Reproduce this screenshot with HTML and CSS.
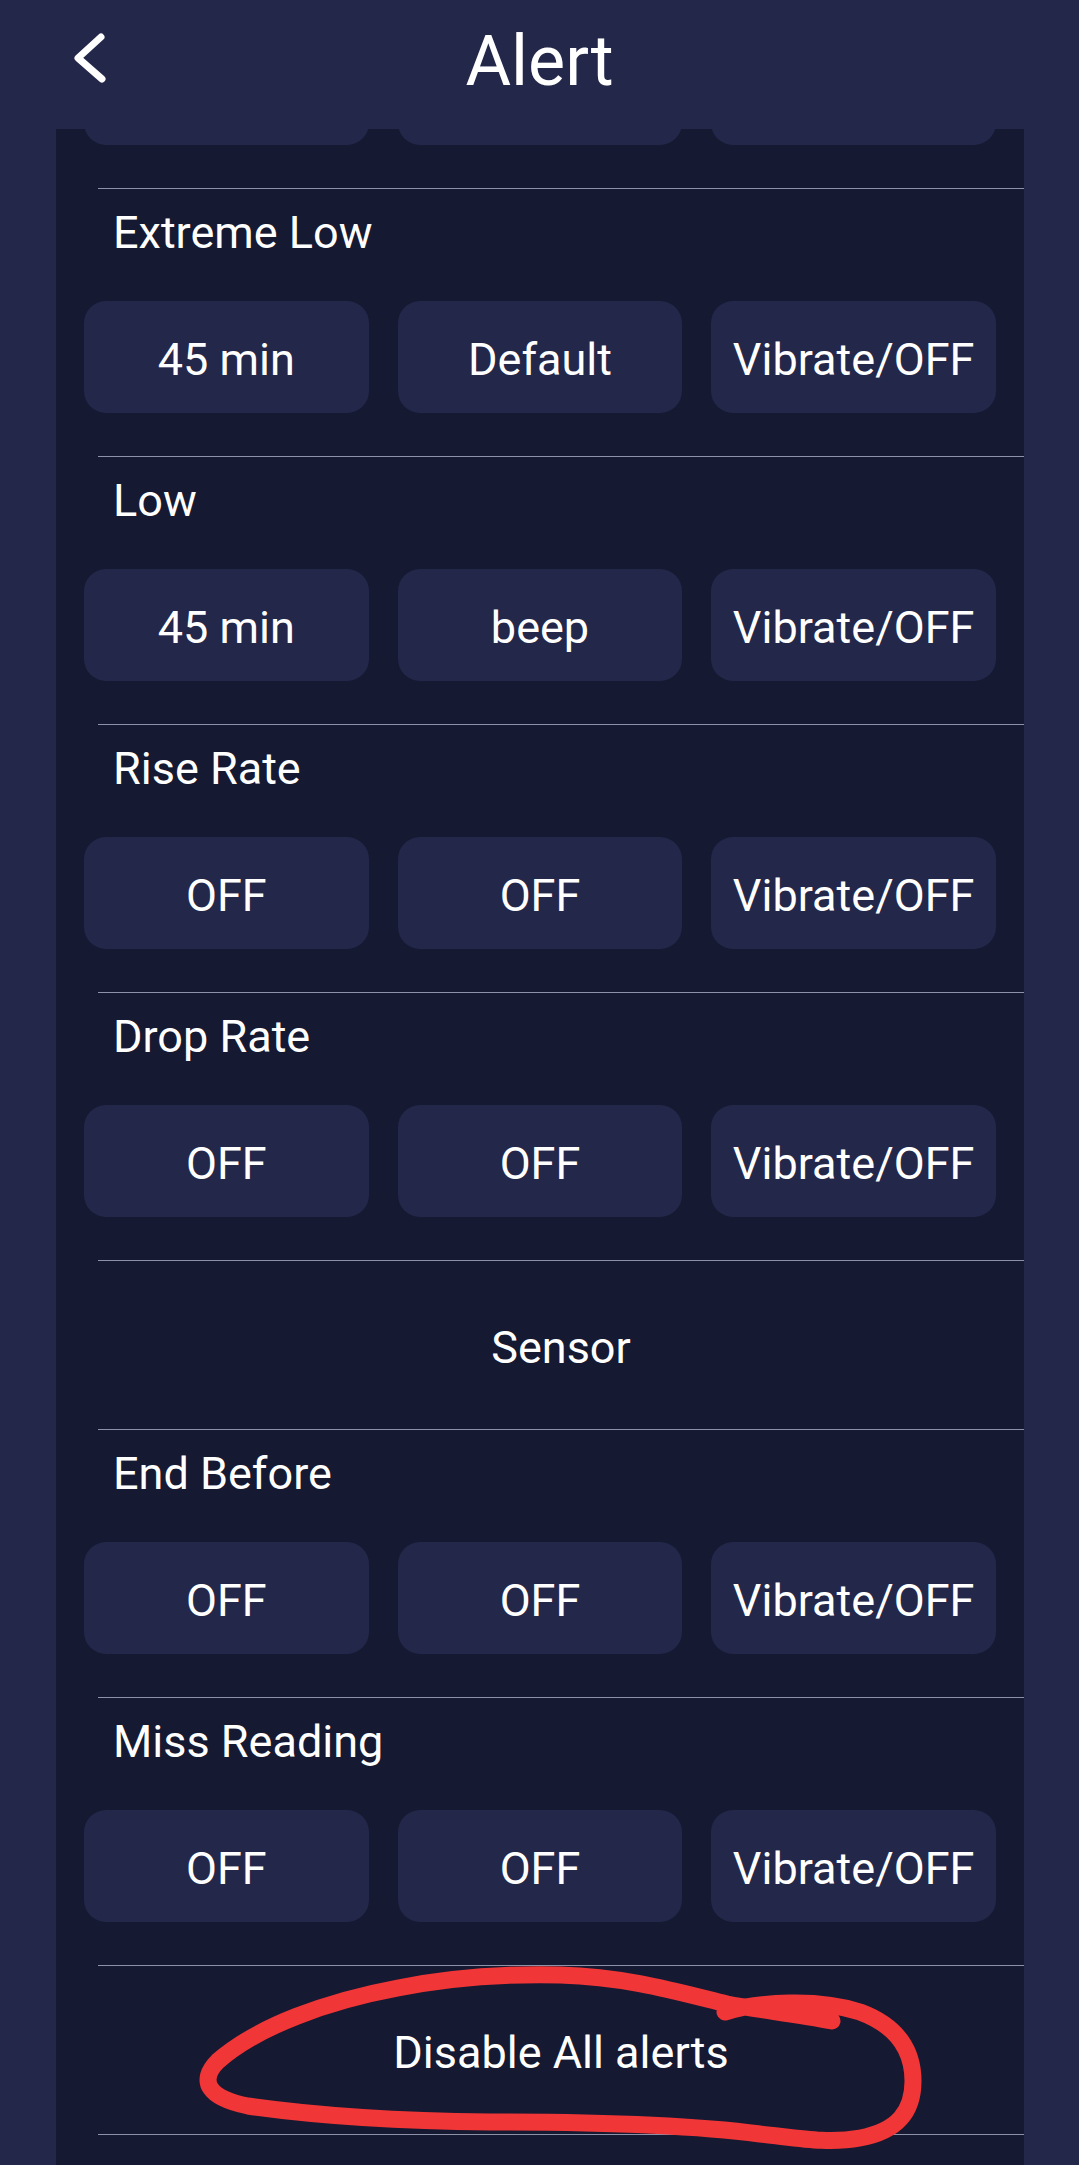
FILE: index.html
```html
<!DOCTYPE html>
<html lang="en">
<head>
  <meta charset="UTF-8">
  <title>Alert</title>
  <link rel="stylesheet" href="styles.css">
</head>
<body>
  <header class="topbar">
    <a class="back" href="#" aria-label="Back">
      <svg width="40" height="56" viewBox="0 0 40 56">
        <path d="M31 7 L8 28 L32 49" fill="none" stroke="#fff" stroke-width="7" stroke-linecap="round" stroke-linejoin="round"/>
      </svg>
    </a>
    <h1>Alert</h1>
    <span></span>
  </header>

  <main class="panel">
    <div class="list">
      <!-- previous row, scrolled under the header -->
      <section class="alert">
        <div class="alert-name">&nbsp;</div>
        <div class="options">
          <button class="option"></button>
          <button class="option"></button>
          <button class="option"></button>
        </div>
      </section>

      <section class="alert">
        <div class="alert-name">Extreme Low</div>
        <div class="options">
          <button class="option">45 min</button>
          <button class="option">Default</button>
          <button class="option">Vibrate/OFF</button>
        </div>
      </section>

      <section class="alert">
        <div class="alert-name">Low</div>
        <div class="options">
          <button class="option">45 min</button>
          <button class="option">beep</button>
          <button class="option">Vibrate/OFF</button>
        </div>
      </section>

      <section class="alert">
        <div class="alert-name">Rise Rate</div>
        <div class="options">
          <button class="option">OFF</button>
          <button class="option">OFF</button>
          <button class="option">Vibrate/OFF</button>
        </div>
      </section>

      <section class="alert">
        <div class="alert-name">Drop Rate</div>
        <div class="options">
          <button class="option">OFF</button>
          <button class="option">OFF</button>
          <button class="option">Vibrate/OFF</button>
        </div>
      </section>

      <section class="alert heading">Sensor</section>

      <section class="alert">
        <div class="alert-name">End Before</div>
        <div class="options">
          <button class="option">OFF</button>
          <button class="option">OFF</button>
          <button class="option">Vibrate/OFF</button>
        </div>
      </section>

      <section class="alert">
        <div class="alert-name">Miss Reading</div>
        <div class="options">
          <button class="option">OFF</button>
          <button class="option">OFF</button>
          <button class="option">Vibrate/OFF</button>
        </div>
      </section>

      <section class="alert heading disable">
        Disable All alerts
        <svg class="scribble" viewBox="0 0 926 170" width="926" height="170">
          <path d="M627 46 C660 36, 720 32, 762 46 C800 60, 815 85, 815 115 C815 145, 800 165, 762 172 C730 178, 700 172, 662 168 C600 160, 500 156, 392 156 C300 155, 220 150, 150 140 C110 132, 100 115, 120 95 C160 60, 230 35, 300 22 C360 10, 420 8, 462 9 C530 11, 580 26, 629 38 C660 44, 700 48, 734 55" fill="none" stroke="#f03636" stroke-width="17" stroke-linecap="round" stroke-linejoin="round"/>
        </svg>
      </section>

      <section class="alert"></section>
    </div>
  </main>
</body>
</html>
```

FILE: styles.css
```css
body { margin: 0; background: #23274a; color: #fff; font-family: Roboto, "Noto Sans", sans-serif; }

.topbar { position: fixed; top: 0; left: 0; right: 0; z-index: 2; height: 129px; box-sizing: border-box; padding-bottom: 7px; background: #23274a; display: grid; grid-template-columns: 1fr auto 1fr; align-items: center; }
.topbar h1 { margin: 0; font-size: 70px; font-weight: 400; line-height: 1; }
.back { align-self: start; justify-self: start; margin: 30px 0 0 70px; display: block; line-height: 0; }

.panel { margin: 0 55px 0 56px; min-height: 100vh; background: #151931; overflow: hidden; }
.list { margin-top: -80px; }

.alert { margin-left: 42px; border-top: 1px solid #8e92a8; }
.alert-name { padding: 18px 0 0 15px; margin-bottom: 42px; font-size: 45px; line-height: 52px; }
.options { display: grid; grid-template-columns: repeat(3, 1fr); gap: 29px; margin: 0 28px 43px -14px; }
.option { height: 112px; box-sizing: border-box; padding: 5px 0 0; border: 0; border-radius: 22px; background: #23274a; color: #fff; font-family: inherit; font-size: 45px; line-height: 52px; }

.heading { height: 169px; box-sizing: border-box; padding-top: 4px; display: flex; align-items: center; justify-content: center; font-size: 45px; }
.disable { position: relative; }
.scribble { position: absolute; left: 0; top: 0; overflow: visible; pointer-events: none; }
```
